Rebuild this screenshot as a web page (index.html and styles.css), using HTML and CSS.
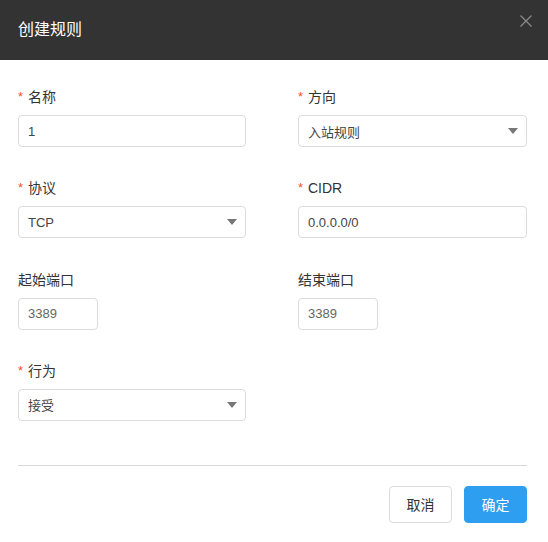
FILE: index.html
```html
<!DOCTYPE html>
<html lang="zh-CN">
<head>
  <meta charset="UTF-8" />
  <title>创建规则</title>
  <link rel="stylesheet" href="styles.css">
</head>
<body>
  <div class="dialog">
    <div class="dialog-header">
      <h3>创建规则</h3>
      <span class="close">
        <svg width="12" height="12" viewBox="0 0 12 12"><path d="M0.5 0.5 L11.5 11.5 M11.5 0.5 L0.5 11.5" stroke="#8a8a8a" stroke-width="1.3" fill="none"/></svg>
      </span>
    </div>
    <form class="dialog-body">
      <div class="grid">
        <div class="field">
          <label class="required">名称</label>
          <input type="text" class="control" value="1" />
        </div>
        <div class="field">
          <label class="required">方向</label>
          <div class="select">入站规则<i class="caret"></i></div>
        </div>
        <div class="field">
          <label class="required">协议</label>
          <div class="select">TCP<i class="caret"></i></div>
        </div>
        <div class="field">
          <label class="required">CIDR</label>
          <input type="text" class="control" value="0.0.0.0/0" />
        </div>
        <div class="field">
          <label>起始端口</label>
          <input type="text" class="control small" value="3389" />
        </div>
        <div class="field">
          <label>结束端口</label>
          <input type="text" class="control small" value="3389" />
        </div>
        <div class="field">
          <label class="required">行为</label>
          <div class="select">接受<i class="caret"></i></div>
        </div>
      </div>
      <div class="divider"></div>
      <div class="actions">
        <button type="button" class="btn">取消</button>
        <button type="submit" class="btn primary">确定</button>
      </div>
    </form>
  </div>
</body>
</html>
```

FILE: styles.css
```css
body { margin: 0; background: #fff; font-family: "Liberation Sans", "Noto Sans CJK SC", sans-serif; color: #333; }
.dialog { width: 548px; }
.dialog-header { height: 60px; background: #333333; display: flex; align-items: center; justify-content: space-between; padding: 0 16px 0 18px; box-sizing: border-box; }
.dialog-header h3 { margin: 0; font-size: 16px; font-weight: normal; color: #fff; line-height: 22px; }
.close { align-self: flex-start; margin-top: 15px; width: 12px; height: 12px; display: block; }
.close svg { display: block; }

.dialog-body { padding: 27px 21px 19px 18px; }
.grid { display: grid; grid-template-columns: 228px 229px; column-gap: 52px; row-gap: 31.34px; }
.field label { display: block; height: 20px; overflow: hidden; font-size: 14px; line-height: 20px; margin-bottom: 8px; color: #333; }
.field label.required::before { content: "*"; color: #f0522d; display: inline-block; width: 10px; font-size: 13px; line-height: 20px; vertical-align: top; }

.control, .select {
  display: block; box-sizing: border-box; height: 32px; width: 100%;
  border: 1px solid #dcdcdc; border-radius: 4px;
  padding: 0 9px; font-size: 13px; color: #444;
  font-family: "Liberation Sans", "Noto Sans CJK SC", sans-serif;
  background: #fff; outline: none; margin: 0;
}
.control.small { width: 80px; color: #666; }
.select { display: flex; align-items: center; justify-content: space-between; padding-right: 8px; }
.caret { width: 0; height: 0; border-left: 5px solid transparent; border-right: 5px solid transparent; border-top: 6px solid #777; }

.divider { height: 1px; background: #d9d9d9; margin-top: 44px; }
.actions { display: flex; justify-content: flex-end; gap: 12px; margin-top: 20px; }
.btn { width: 63px; height: 37px; border: 1px solid #dcdcdc; border-radius: 4px; background: #fff; color: #333; font-size: 14px; font-family: "Liberation Sans", "Noto Sans CJK SC", sans-serif; cursor: pointer; padding: 0; }
.btn.primary { background: #2e9ef0; border-color: #2e9ef0; color: #fff; }
```
